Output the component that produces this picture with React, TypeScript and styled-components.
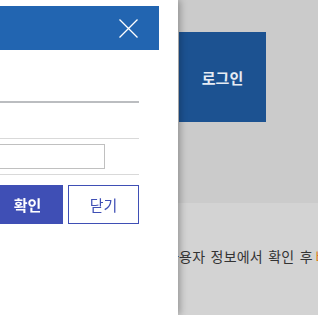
import React from "react"
import styled, { createGlobalStyle } from "styled-components"

const GlobalStyle = createGlobalStyle`
  html, body {
    margin: 0;
    padding: 0;
    background: #cbcbcb;
    font-family: "Noto Sans CJK KR", "Liberation Sans", sans-serif;
  }
  * { box-sizing: border-box; }
`

const Page = styled.div`
  width: 318px;
  height: 315px;
  overflow: hidden;
  display: flex;
  flex-direction: column;
`

const TopArea = styled.div`
  height: 203px;
  padding: 32px 0 0 179px;
  background: #cbcbcb;
`

const LoginButton = styled.button`
  width: 87px;
  height: 90px;
  border: none;
  background: #1c5291;
  color: #e6ecf4;
  font-family: inherit;
  font-size: 15px;
  font-weight: 700;
  padding: 0;
`

const BottomArea = styled.div`
  flex: 1;
  background: #d3d3d3;
  padding: 41px 0 0 166px;
  white-space: nowrap;
  overflow: hidden;
  font-size: 14px;
  letter-spacing: 0.2px;
  word-spacing: 2px;
  line-height: 24px;
  color: #333;
`

const Highlight = styled.span`
  color: #e07b1a;
  margin-left: -3px;
`

const Panel = styled.div`
  position: fixed;
  top: 0;
  left: 0;
  bottom: 0;
  width: 178px;
  background: #fff;
  padding-top: 6px;
  overflow: hidden;
  box-shadow: 2px 0 7px rgba(0, 0, 0, 0.3);
`

const Header = styled.div`
  height: 44px;
  margin-right: 19px;
  background: #2265b1;
  display: flex;
  align-items: center;
  justify-content: flex-end;
  padding-right: 21px;
`

const CloseButton = styled.button`
  width: 19px;
  height: 19px;
  padding: 0;
  border: none;
  background: none;
  display: flex;
`

const Body = styled.div`
  margin-right: 39px;
`

const TitleRow = styled.div`
  height: 53px;
  border-bottom: 2px solid #bbbdc0;
`

const Row = styled.div<{ $height: number }>`
  height: ${(p) => p.$height}px;
  border-bottom: 1px solid #d9d9d9;
  display: flex;
  align-items: center;
  justify-content: flex-end;
`

const TextInput = styled.input`
  width: 160px;
  height: 25px;
  margin-right: 34px;
  border: 1px solid #c0c0c0;
  flex-shrink: 0;
`

const ButtonRow = styled.div`
  display: flex;
  justify-content: flex-end;
  gap: 5px;
  padding-top: 10px;
`

const ActionButton = styled.button<{ $primary?: boolean }>`
  flex-shrink: 0;
  width: 71px;
  height: 39px;
  font-family: inherit;
  font-size: 15px;
  font-weight: ${(p) => (p.$primary ? 700 : 400)};
  border: 1px solid #3f4fb5;
  background: ${(p) => (p.$primary ? "#3f4fb5" : "#fff")};
  color: ${(p) => (p.$primary ? "#fff" : "#3f4fb5")};
  padding: 0;
`

export default function App() {
  return (
    <>
      <GlobalStyle />
      <Page>
        <TopArea>
          <LoginButton>로그인</LoginButton>
        </TopArea>
        <BottomArea>
          사용자 정보에서 확인 후 <Highlight>비밀번호</Highlight>
        </BottomArea>
      </Page>
      <Panel>
        <Header>
          <CloseButton aria-label="닫기">
            <svg width="19" height="19" viewBox="0 0 19 19">
              <path d="M0.5 0.5L18.5 18.5M18.5 0.5L0.5 18.5" stroke="#fff" strokeWidth="1.3" />
            </svg>
          </CloseButton>
        </Header>
        <Body>
          <TitleRow />
          <Row $height={36} />
          <Row $height={36}>
            <TextInput />
          </Row>
          <ButtonRow>
            <ActionButton $primary>확인</ActionButton>
            <ActionButton>닫기</ActionButton>
          </ButtonRow>
        </Body>
      </Panel>
    </>
  )
}
